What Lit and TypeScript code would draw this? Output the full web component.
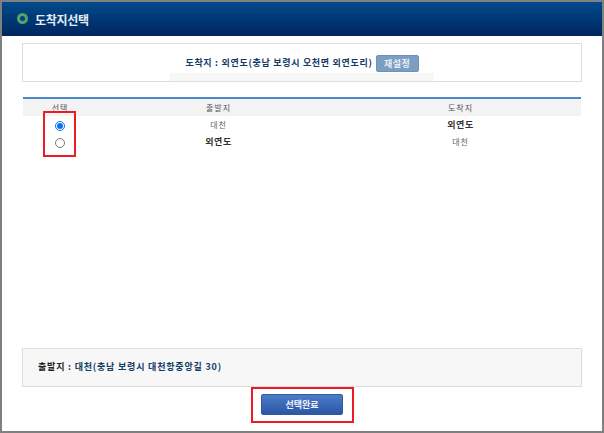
import { LitElement, html, css } from "lit";
import { customElement } from "lit/decorators.js";

@customElement("app-root")
export class AppRoot extends LitElement {
  static styles = css`
    :host {
      display: block;
      width: 604px;
      height: 433px;
      box-sizing: border-box;
      padding: 2px;
      background: #808080;
      font-family: "Noto Sans CJK KR", "Liberation Sans", sans-serif;
      overflow: hidden;
    }
    .win {
      position: relative;
      height: 429px;
      background: #fff;
      display: flex;
      flex-direction: column;
    }
    .head {
      height: 34px;
      flex: none;
      background: linear-gradient(#004a8c, #00265e);
      display: flex;
      align-items: center;
      gap: 7px;
      padding-left: 15px;
      color: #e4ecf4;
      font-size: 12px;
      font-weight: 700;
      letter-spacing: -0.3px;
    }
    .dot {
      width: 5px;
      height: 5px;
      border: 3px solid #4fa56c;
      border-radius: 50%;
      background: #0d3f78;
      margin-top: -1px;
    }
    .body {
      flex: 1;
      display: flex;
      flex-direction: column;
      padding: 7px 20px 0 20px;
    }
    .dest {
      height: 39px;
      box-sizing: border-box;
      border: 1px solid #ddd;
      display: flex;
      flex-direction: column;
      align-items: center;
    }
    .dest-row {
      height: 29px;
      display: flex;
      align-items: flex-end;
      gap: 3px;
      font-size: 9px;
      font-weight: 700;
      color: #123a66;
      line-height: 18px;
      white-space: nowrap;
      letter-spacing: 0.7px;
    }
    .dest-row span {
      height: 18px;
      margin-bottom: 1px;
    }
    .reset {
      width: 43px;
      height: 17px;
      box-sizing: border-box;
      border: 1px solid #6f93b8;
      border-radius: 2px;
      background: #7c9ec2;
      color: #e8eff6;
      font: 700 9px/15px "Noto Sans CJK KR", sans-serif;
      letter-spacing: 0.5px;
      padding: 0;
      text-align: center;
      margin-bottom: 1px;
    }
    .strip {
      width: 264px;
      height: 8px;
      background: #f7f7f7;
    }
    .tbl {
      margin: 15px 1px 0 1px;
      border-top: 2px solid #4a86c8;
      display: grid;
      grid-template-columns: 74px 243px 241px;
      font-size: 8px;
      color: #666;
      text-align: center;
      letter-spacing: 1px;
    }
    .tbl > div {
      display: flex;
      align-items: center;
      justify-content: center;
      height: 17px;
    }
    .tbl > .th {
      background: #f3f3f3;
      color: #555;
    }
    .tbl > .strong {
      font-weight: 700;
      font-size: 9px;
      color: #333;
      letter-spacing: 0.5px;
    }
    input {
      margin: 2px 0 0;
      width: 10px;
      height: 10px;
      accent-color: #0b6ff0;
    }
    .origin {
      height: 39px;
      box-sizing: border-box;
      border: 1px solid #ddd;
      background: #f7f7f7;
      display: flex;
      align-items: center;
      padding: 0 0 2px 15px;
      font-size: 9px;
      font-weight: 700;
      color: #123a66;
      white-space: nowrap;
      margin-top: auto;
      letter-spacing: 0.8px;
    }
    .origin b { color: #222; font-weight: 700; }
    .foot {
      height: 44px;
      flex: none;
      display: flex;
      justify-content: center;
      padding-top: 7px;
      box-sizing: border-box;
    }
    .done {
      width: 82px;
      height: 21px;
      box-sizing: border-box;
      border: 1px solid #2f5aa5;
      border-radius: 2px;
      background: linear-gradient(#4c7cc8, #2c56a4);
      color: #eef3fa;
      font: 700 9px/19px "Noto Sans CJK KR", sans-serif;
      padding: 0;
    }
    .mark {
      position: absolute;
      box-sizing: border-box;
      border: 2px solid #ed1c24;
    }
    .m1 { left: 41px; top: 109px; width: 33px; height: 46px; }
    .m2 { left: 249px; top: 385px; width: 103px; height: 36px; }
  `;

  render() {
    return html`
      <div class="win">
        <div class="head"><i class="dot"></i>도착지선택</div>
        <div class="body">
          <div class="dest">
            <div class="dest-row"><span>도착지 : 외연도(충남 보령시 오천면 외연도리)</span><button class="reset">재설정</button></div>
            <div class="strip"></div>
          </div>
          <div class="tbl">
            <div class="th">선택</div><div class="th">출발지</div><div class="th">도착지</div>
            <div><input type="radio" name="r" checked /></div><div>대천</div><div class="strong">외연도</div>
            <div><input type="radio" name="r" /></div><div class="strong">외연도</div><div>대천</div>
          </div>
          <div class="origin"><b>출발지</b>&nbsp;: 대천(충남 보령시 대천항중앙길 30)</div>
        </div>
        <div class="foot"><button class="done">선택완료</button></div>
        <div class="mark m1"></div>
        <div class="mark m2"></div>
      </div>
    `;
  }
}
